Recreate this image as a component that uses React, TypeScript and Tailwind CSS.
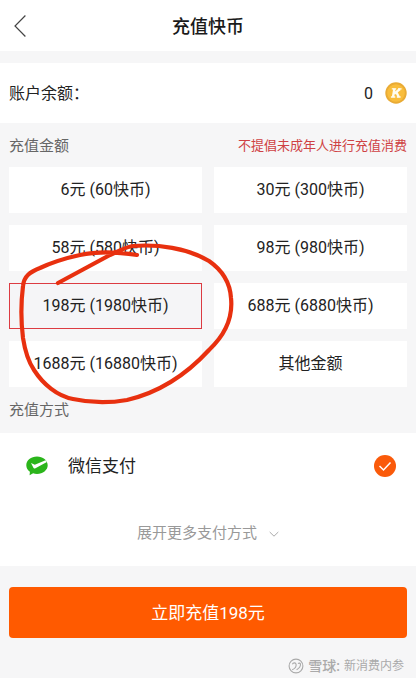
import React, { useState } from "react";

interface RechargeOption {
  price: number;
  coins: number;
}

const options: RechargeOption[] = [
  { price: 6, coins: 60 },
  { price: 30, coins: 300 },
  { price: 58, coins: 580 },
  { price: 98, coins: 980 },
  { price: 198, coins: 1980 },
  { price: 688, coins: 6880 },
  { price: 1688, coins: 16880 },
];

const BackIcon = () => (
  <svg className="h-6 w-3" viewBox="0 0 12 24" fill="none" stroke="#444" strokeWidth="1.2">
    <path d="M11.4 1.5 1 12l10.4 10.5" />
  </svg>
);

const CoinIcon = () => (
  <svg className="size-[22px]" viewBox="0 0 22 22">
    <circle cx="11" cy="11" r="10.7" fill="#e9ab35" />
    <circle cx="11" cy="11" r="8.8" fill="#f9bd3c" />
    <g stroke="#fffdf2" fill="none">
      <path d="M9.4 6.8 8 15M15 7l-5.6 4.6M11.4 10.2l2.4 4.8" strokeWidth="2.4" />
      <path d="M6.8 6.9h4.4M13 6.9h3.6M5.9 15h4.4M11.8 15h3.8" strokeWidth="1.4" />
    </g>
  </svg>
);

const WechatPayIcon = () => (
  <svg className="h-5 w-[22px]" viewBox="0 0 22 20">
    <path
      d="M11 .5C5 .5.3 4.3.3 9.2c0 2.7 1.4 5 3.6 6.6l-.3 3.5 3.5-2c1.2.4 2.5.6 3.9.6 5.9 0 10.7-3.9 10.7-8.7S16.9.5 11 .5z"
      fill="#2bb51b"
    />
    <path d="M5 6.9 8.8 8.8 19.6 4.2l1.3 1.7L9 12.4c-.7.4-1.3.1-1.6-.6z" fill="#fff" />
  </svg>
);

const ChevronIcon = () => (
  <svg className="h-2 w-[10px]" viewBox="0 0 10 8" fill="none" stroke="#aaa">
    <path d="m.7 2 4.3 4.2L9.3 2" />
  </svg>
);

const XueqiuIcon = () => (
  <svg className="size-4" viewBox="0 0 16 16" fill="none" stroke="#aaa" strokeWidth="1.1">
    <circle cx="8" cy="8" r="6.9" />
    <path d="M4.2 11.8c2.4-1 4.2-3.3 3.9-5.4-.3-1.9-3-2-3.7-.2M8.6 11.8c2-1.2 4-3.4 3.9-5.4-.1-1.4-1.6-1.7-2.4-.7" />
  </svg>
);

// Freehand circle drawn over the selected amount
const MarkerCircle = () => (
  <svg
    className="pointer-events-none absolute left-0 top-[73px] h-[170px] w-[240px]"
    viewBox="0 240 240 170"
    fill="none"
    stroke="#e8300f"
    strokeWidth="4.2"
    strokeLinecap="round"
    strokeLinejoin="round"
  >
    <path d="M137 255C118 252 98 251 80 255C66 258 53 262 40 268C30 272 24 276 23 286C21 302 21 322 23 338C25 351 28 361 34 370C43 384 57 396 73 399C91 403 110 403 127 400C157 393 186 375 209 350C225 335 233 317 231 298C230 282 222 270 209 261C187 248 158 244 133 246C125 247 119 251 110 255L58 283" />
  </svg>
);

interface AmountButtonProps {
  selected: boolean;
  onSelect: () => void;
  children: React.ReactNode;
}

const AmountButton: React.FC<AmountButtonProps> = ({ selected, onSelect, children }) => (
  <button
    type="button"
    aria-pressed={selected}
    onClick={onSelect}
    className={
      selected
        ? "h-[46px] border border-[#dc3b42] bg-[#f5f5f7] text-base text-[#222]"
        : "h-[46px] border border-white bg-white text-base text-[#222]"
    }
  >
    {children}
  </button>
);

const App: React.FC = () => {
  const [selected, setSelected] = useState(198);

  return (
    <div className="flex min-h-screen flex-col bg-[#f6f6f7] font-[Roboto,'Noto_Sans_CJK_SC',sans-serif] text-[#222]">
      <header className="grid h-[51px] grid-cols-[1fr_auto_1fr] items-center bg-white px-[14px]">
        <button type="button" aria-label="返回" className="justify-self-start">
          <BackIcon />
        </button>
        <h1 className="pt-0.5 text-lg font-medium text-[#1a1a1a]">充值快币</h1>
      </header>

      <section className="mt-3 flex h-[60px] items-center justify-between bg-white px-[9px] text-base">
        <span className="pt-0.5">账户余额：</span>
        <span className="flex items-center gap-3">
          <span className="pt-0.5">0</span>
          <CoinIcon />
        </span>
      </section>

      <main>
        <div className="flex h-11 items-center justify-between px-[9px] pt-0.5">
          <h2 className="text-[15px] text-[#666]">充值金额</h2>
          <p className="text-[13px] text-[#cf4244]">不提倡未成年人进行充值消费</p>
        </div>

        <div className="relative">
          <div className="grid grid-cols-2 gap-3 px-[9px]">
            {options.map(({ price, coins }) => (
              <AmountButton key={price} selected={selected === price} onSelect={() => setSelected(price)}>
                {price}元 ({coins}快币)
              </AmountButton>
            ))}
            <AmountButton selected={selected === 0} onSelect={() => setSelected(0)}>
              其他金额
            </AmountButton>
          </div>
          <MarkerCircle />
        </div>

        <h2 className="flex h-[46px] items-center px-[9px] text-[15px] text-[#666]">充值方式</h2>

        <section className="bg-white">
          <label className="flex h-[66px] items-center pl-[26px] pr-5 text-[17px]">
            <WechatPayIcon />
            <span className="ml-5 flex-1 pt-0.5">微信支付</span>
            <span className="relative size-[22px]">
              <input
                type="radio"
                name="payment"
                defaultChecked
                className="block size-[22px] appearance-none rounded-full bg-[#fa5a0a]"
              />
              <svg
                className="pointer-events-none absolute inset-0 size-[22px]"
                viewBox="0 0 22 22"
                fill="none"
                stroke="#fff"
                strokeWidth="1.5"
              >
                <path d="m5.5 11 4 4 7-7.5" />
              </svg>
            </span>
          </label>
          <button
            type="button"
            className="flex h-[67px] w-full items-center justify-center gap-3 pt-0.5 text-[15px] text-[#999]"
          >
            展开更多支付方式
            <ChevronIcon />
          </button>
        </section>

        <div className="px-[9px] pt-[21px]">
          <button type="button" className="h-[51px] w-full rounded bg-[#ff5a00] pt-0.5 text-[17px] text-white">
            {selected ? `立即充值${selected}元` : "立即充值"}
          </button>
        </div>
      </main>

      <footer className="flex h-10 items-center justify-end gap-1 px-3 pt-4 text-xs text-[#aaa]">
        <XueqiuIcon />
        <span className="text-sm font-medium">雪球:</span>
        <span>新消费内参</span>
      </footer>
    </div>
  );
};

export default App;
